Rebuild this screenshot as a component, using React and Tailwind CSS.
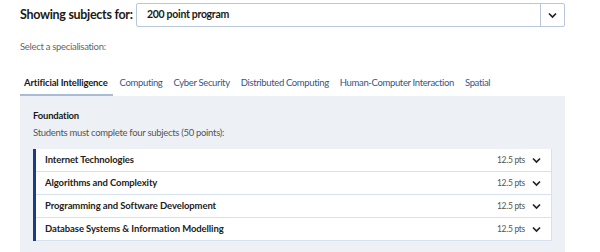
import React from "react";

const font = { fontFamily: "Lato, 'Open Sans', sans-serif" };

function Chevron({ className = "" }) {
  return (
    <svg width="9" height="7" viewBox="0 0 9 7" className={"shrink-0 " + className}>
      <path d="M1 1.5 L4.5 5 L8 1.5" fill="none" stroke="#222" strokeWidth="1.7" />
    </svg>
  );
}

const tabs = [
  "Artificial Intelligence",
  "Computing",
  "Cyber Security",
  "Distributed Computing",
  "Human-Computer Interaction",
  "Spatial",
];

const subjects = [
  "Internet Technologies",
  "Algorithms and Complexity",
  "Programming and Software Development",
  "Database Systems & Information Modelling",
];

export default function App() {
  return (
    <div className="w-[600px] h-[252px] overflow-hidden bg-white pl-[20px] whitespace-nowrap" style={font}>
      <div className="w-[545px]">
        <div className="flex items-center pt-[3px] h-[27px]">
          <div className="text-[12.5px] tracking-[-0.3px] font-bold text-[#1a1a1a] w-[116px] shrink-0">Showing subjects for:</div>
          <div className="flex-1 h-[24px] border border-[#b9c7da] rounded-[2px] flex">
            <div className="flex-1 flex items-center pl-[10px] text-[10.5px] tracking-[-0.3px] font-bold text-[#1a1a1a]">200 point program</div>
            <div className="w-[24px] border-l border-[#b9c7da] flex items-center justify-center">
              <Chevron />
            </div>
          </div>
        </div>
        <div className="text-[9.5px] tracking-[-0.3px] text-[#666] mt-[13px] leading-[14px]">Select a specialisation:</div>
        <div className="flex mt-[22px] h-[20px]">
          {tabs.map((t, i) => (
            <div
              key={t}
              className={
                i === 0
                  ? "shrink-0 pl-[4px] pr-[5px] mr-[7px] text-[9.5px] tracking-[-0.15px] font-bold text-[#1a1a1a] border-b-2 border-[#a9bcd6] h-[20px] leading-[14px]"
                  : "shrink-0 mr-[11px] text-[9.5px] tracking-[-0.35px] text-[#34568b] h-[20px] leading-[14px]"
              }
            >
              {t}
            </div>
          ))}
        </div>
        <div className="bg-[#edf1f5] h-[160px] px-[13px] pt-[13px]">
          <div className="text-[9.5px] tracking-[-0.2px] font-bold text-[#1a1a1a] leading-[14px]">Foundation</div>
          <div className="text-[9.5px] tracking-[-0.3px] text-[#555] mt-[3px] leading-[14px]">
            Students must complete four subjects (50 points):
          </div>
          <div className="mt-[9px] border-l-[3px] border-[#1c3d86] w-[519px] bg-white">
            {subjects.map((s) => (
              <div
                key={s}
                className="h-[23px] flex items-center border-b border-r border-[#d5e1ee] pl-[9px] pr-[10px]"
              >
                <div className="flex-1 text-[9.5px] tracking-[-0.1px] font-bold text-[#222]">{s}</div>
                <div className="text-[8.5px] tracking-[-0.3px] text-[#555] mr-[7px]">12.5 pts</div>
                <Chevron />
              </div>
            ))}
          </div>
        </div>
      </div>
    </div>
  );
}
